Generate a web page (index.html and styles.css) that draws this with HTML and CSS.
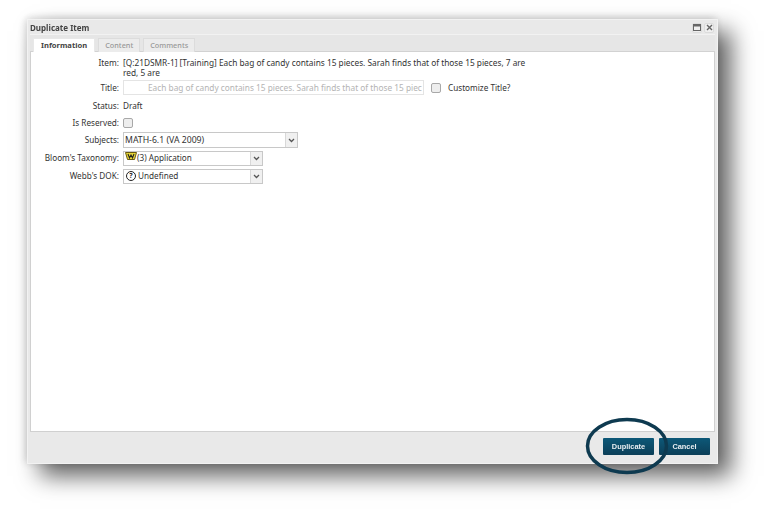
FILE: index.html
```html
<!DOCTYPE html>
<html lang="en">
<head>
<meta charset="utf-8">
<title>Duplicate Item</title>
<link rel="stylesheet" href="styles.css">
</head>
<body>
<div class="window">
  <div class="titlebar">
    <span class="title">Duplicate Item</span>
    <span class="winbtns">
      <span class="winbtn"><svg width="8" height="7" viewBox="0 0 8 7"><rect x="0.5" y="0.5" width="7" height="6" fill="none" stroke="#666"/><rect x="0.5" y="0.5" width="7" height="2" fill="#666"/></svg></span>
      <span class="winbtn"><svg width="7" height="7" viewBox="0 0 7 7"><path d="M1 1L6 6M6 1L1 6" stroke="#666" stroke-width="1.4"/></svg></span>
    </span>
  </div>
  <div class="tabs">
    <span class="tab active">Information</span>
    <span class="tab">Content</span>
    <span class="tab">Comments</span>
  </div>
  <div class="panel">
    <div class="row item">
      <span class="label">Item:</span>
      <span class="value itemtext">[Q:21DSMR-1] [Training] Each bag of candy contains 15 pieces. Sarah finds that of those 15 pieces, 7 are red, 5 are</span>
    </div>
    <div class="row titlerow">
      <span class="label">Title:</span>
      <span class="titleinput">Each bag of candy contains 15 pieces. Sarah finds that of those 15 piec</span>
      <span class="check customize"></span>
      <span class="value">Customize Title?</span>
    </div>
    <div class="row status">
      <span class="label">Status:</span>
      <span class="value">Draft</span>
    </div>
    <div class="row reserved">
      <span class="label">Is Reserved:</span>
      <span class="check"></span>
    </div>
    <div class="row selectrow first">
      <span class="label">Subjects:</span>
      <span class="select wide"><span class="seltext">MATH-6.1 (VA 2009)</span><span class="arrow"><svg width="7" height="5" viewBox="0 0 7 5"><path d="M1 1L3.5 3.5L6 1" fill="none" stroke="#555" stroke-width="1.3"/></svg></span></span>
    </div>
    <div class="row selectrow">
      <span class="label">Bloom's Taxonomy:</span>
      <span class="select"><span class="seltext"><svg class="bloom" width="12" height="10" viewBox="0 0 12 10"><path d="M0.5 0.5H11.5L9.5 7.5H2.5Z" fill="#e8d838" stroke="#6a5a10"/><path d="M3 2L4.5 6L6 3L7.5 6L9 2" fill="none" stroke="#222" stroke-width="1.1"/></svg>(3) Application</span><span class="arrow"><svg width="7" height="5" viewBox="0 0 7 5"><path d="M1 1L3.5 3.5L6 1" fill="none" stroke="#555" stroke-width="1.3"/></svg></span></span>
    </div>
    <div class="row selectrow">
      <span class="label">Webb's DOK:</span>
      <span class="select"><span class="seltext"><span class="qmark">?</span>Undefined</span><span class="arrow"><svg width="7" height="5" viewBox="0 0 7 5"><path d="M1 1L3.5 3.5L6 1" fill="none" stroke="#555" stroke-width="1.3"/></svg></span></span>
    </div>
  </div>
  <div class="footer">
    <span class="btn">Duplicate</span>
    <span class="btn">Cancel</span>
  </div>
  <svg class="ring" width="84" height="60" viewBox="0 0 84 60"><ellipse cx="42" cy="30" rx="39.5" ry="26.5" fill="none" stroke="#0e3a50" stroke-width="3.5"/></svg>
</div>
</body>
</html>
```
FILE: styles.css
```css
html, body {
  margin: 0;
  height: 100%;
  background: #fff;
  overflow: hidden;
}
body {
  padding: 19px 0 0 27px;
  box-sizing: border-box;
  font-family: "Noto Sans", "Liberation Sans", sans-serif;
  font-size: 8.2px;
  color: #333;
}
.window {
  position: relative;
  width: 691px;
  height: 445px;
  box-sizing: border-box;
  background: #e9e9e9;
  border: 1px solid #f2f2f2;
  box-shadow: 13px 12px 22px rgba(0, 0, 0, 0.62), -3px 0 8px rgba(0, 0, 0, 0.1), 0 -3px 8px rgba(0, 0, 0, 0.08);
  display: flex;
  flex-direction: column;
  padding: 0 2px;
  filter: blur(0.35px);
}
.titlebar {
  height: 13px;
  display: flex;
  align-items: center;
  justify-content: space-between;
  padding-top: 1px;
}
.title {
  font-weight: 700;
  font-size: 8px;
  color: #444;
}
.winbtns {
  display: flex;
  gap: 2px;
  margin-right: 1px;
}
.winbtn {
  width: 10px;
  height: 10px;
  border: 1px solid #dcdcdc;
  border-radius: 2px;
  box-sizing: border-box;
  display: flex;
  align-items: center;
  justify-content: center;
  background: #efefef;
}
.winbtn svg {
  display: block;
}
.tabs {
  height: 18px;
  display: flex;
  gap: 3px;
  padding: 3px 0 0 3px;
  box-sizing: border-box;
  background: #e6e6e6;
  border-top: 1px solid #f2f2f2;
  border-bottom: 1px solid #d2d2d2;
}
.tab {
  box-sizing: border-box;
  height: 14px;
  padding: 0 6px 2px;
  display: flex;
  align-items: center;
  background: #ececec;
  border: 1px solid #dcdcdc;
  border-bottom: 0;
  color: #999;
  font-size: 7.3px;
  font-weight: 500;
}
.tab.active {
  background: #fff;
  color: #444;
  font-weight: 700;
  font-size: 7.6px;
  height: 15px;
  padding: 0 7px 2px;
  border-color: #e8e8e8;
}
.panel {
  flex: 1;
  background: #fff;
  border: 1px solid #d0d0d0;
  border-top: 0;
  padding-top: 6px;
  display: flex;
  flex-direction: column;
}
.row {
  display: flex;
  align-items: center;
  gap: 4px;
  line-height: 10px;
}
.label {
  width: 88px;
  text-align: right;
  flex: none;
}
.item {
  align-items: flex-start;
  height: 21px;
  font-size: 8.3px;
}
.itemtext {
  width: 412px;
}
.titlerow {
  margin-top: 1px;
  height: 15px;
}
.titleinput {
  width: 301px;
  height: 15px;
  box-sizing: border-box;
  border: 1px solid #e4e4e4;
  padding-left: 24px;
  display: flex;
  align-items: center;
  color: #b4b4b4;
  white-space: nowrap;
  font-size: 8.3px;
}
.check {
  width: 10px;
  height: 10px;
  box-sizing: border-box;
  border: 1px solid #a8a8a8;
  border-radius: 2px;
  background: #eee;
  flex: none;
}
.customize {
  margin: 0 3px 0 3px;
}
.status {
  margin-top: 2px;
  height: 17px;
}
.reserved {
  height: 17px;
}
.selectrow {
  height: 15px;
  margin-top: 3px;
}
.selectrow.first {
  height: 16px;
  margin-top: 1px;
}
.selectrow .label {
  padding-bottom: 1px;
}
.select {
  width: 140px;
  height: 100%;
  box-sizing: border-box;
  border: 1px solid #c8c8c8;
  display: flex;
  background: #fff;
}
.select.wide {
  width: 175px;
  font-size: 8.7px;
}
.seltext {
  flex: 1;
  display: flex;
  align-items: center;
  padding: 0 0 1px 1px;
  color: #333;
}
.arrow {
  width: 11px;
  border-left: 1px solid #d8d8d8;
  background: #f0f0f0;
  display: flex;
  align-items: center;
  justify-content: center;
}
.bloom {
  margin: -3px 0 0 0;
}
.qmark {
  width: 10px;
  height: 10px;
  border: 1px solid #222;
  border-radius: 50%;
  box-sizing: border-box;
  display: flex;
  align-items: center;
  justify-content: center;
  font-size: 7px;
  font-weight: 700;
  color: #222;
  margin: 0 2px 0 1px;
}
.footer {
  height: 31px;
  display: flex;
  justify-content: flex-end;
  align-items: center;
  gap: 5px;
  padding: 0 5px 2px 0;
  box-sizing: border-box;
}
.btn {
  height: 17px;
  width: 51px;
  display: flex;
  align-items: center;
  justify-content: center;
  background: linear-gradient(#0d5878, #0c3f58);
  border-radius: 1px;
  color: #e8eef2;
  font-family: "Liberation Sans", sans-serif;
  font-weight: 700;
  font-size: 7.4px;
}
.ring {
  position: absolute;
  right: 48px;
  bottom: -13px;
}
```
